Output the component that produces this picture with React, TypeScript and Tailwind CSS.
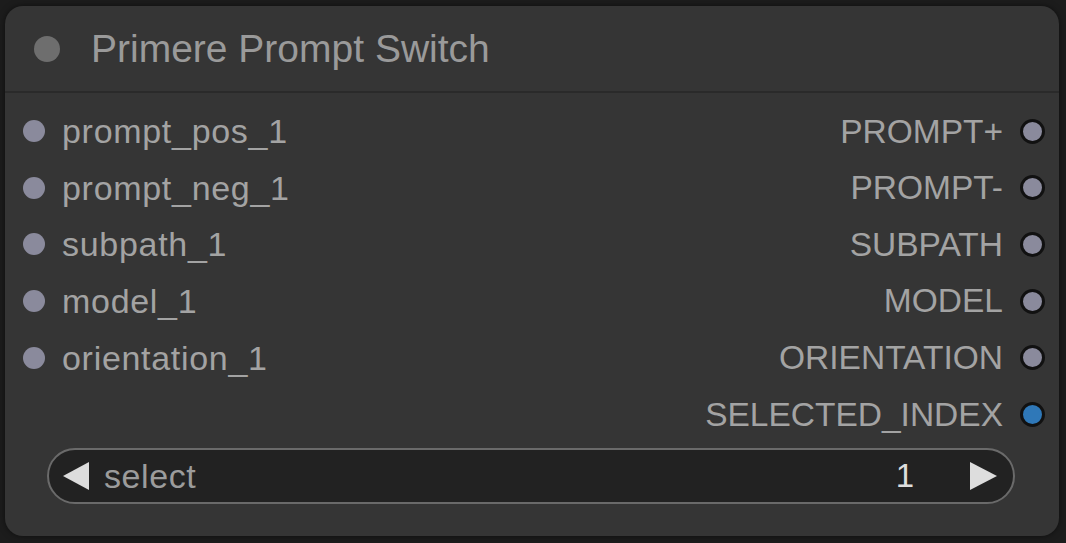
import React from "react";

const inputs = ["prompt_pos_1", "prompt_neg_1", "subpath_1", "model_1", "orientation_1"];
const outputs = ["PROMPT+", "PROMPT-", "SUBPATH", "MODEL", "ORIENTATION", "SELECTED_INDEX"];

export default function App() {
  return (
    <div
      className="w-[1066px] h-[543px] bg-[#1c1c1c] pt-[6px] pl-[5px] overflow-hidden"
      style={{ fontFamily: '"Liberation Sans", Arial, sans-serif' }}
    >
      <div className="w-[1054px] h-[530px] rounded-[18px] bg-[#353535] flex flex-col shadow-[0_0_6px_rgba(0,0,0,0.5)]">
        <div className="h-[85px] flex items-center shrink-0">
          <div className="ml-[29px] w-[26px] h-[26px] rounded-full bg-[#6e6e6e]" />
          <div className="ml-[31px] text-[39px] leading-none text-[#9a9a9a]">Primere Prompt Switch</div>
        </div>
        <div className="h-[2px] bg-[#2a2a2a] shrink-0" />
        <div className="pt-[10px] flex">
          <div className="flex-1 flex flex-col">
            {inputs.map((n) => (
              <div key={n} className="h-[56.6px] flex items-center">
                <div className="ml-[18px] w-[22px] h-[22px] rounded-full bg-[#8a8a9c]" />
                <div className="ml-[17px] text-[34px] leading-none text-[#a3a3a3] tracking-[0.7px]">{n}</div>
              </div>
            ))}
          </div>
          <div className="flex flex-col items-end pr-[14px]">
            {outputs.map((n, i) => (
              <div key={n} className="h-[56.6px] flex items-center">
                <div className="text-[33.5px] leading-none text-[#a3a3a3]">{n}</div>
                <div
                  className={
                    i === 5
                      ? "ml-[17px] w-[25px] h-[25px] rounded-full bg-[#2f78b8] border-[3px] border-[#111]"
                      : "ml-[17px] w-[25px] h-[25px] rounded-full bg-[#8a8a9c] border-[3px] border-[#111]"
                  }
                />
              </div>
            ))}
          </div>
        </div>
        <div className="mt-[5px] ml-[42px] mr-[44px] h-[56px] rounded-full border-2 border-[#6a6a6a] bg-[#222222] flex items-center">
          <svg className="ml-[14px]" width="26" height="28" viewBox="0 0 26 28">
            <polygon points="26,0 26,28 0,14" fill="#dddddd" />
          </svg>
          <div className="ml-[15px] text-[34px] leading-none text-[#9c9c9c] tracking-[0.6px]">select</div>
          <div className="flex-1" />
          <div className="text-[33px] leading-none text-[#dddddd]">1</div>
          <svg className="ml-[56px] mr-[16px]" width="27" height="28" viewBox="0 0 27 28">
            <polygon points="0,0 0,28 27,14" fill="#dddddd" />
          </svg>
        </div>
      </div>
    </div>
  );
}
